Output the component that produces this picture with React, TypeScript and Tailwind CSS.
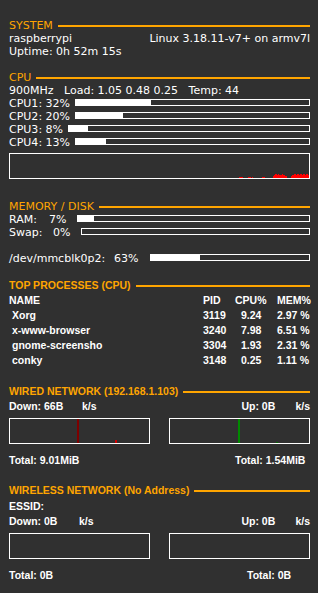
import clsx from "clsx";

const Header = ({ title, bold }: { title: string; bold?: boolean }) => (
  <div
    className={clsx(
      "flex items-center text-[#ffa500]",
      bold ? "h-[15px]" : "h-[13px]"
    )}
  >
    <span className="whitespace-pre">{title}</span>
    <div className="ml-[5px] h-[2px] flex-1 bg-[#ffa500]" />
  </div>
);

const Bar = ({ pct, className }: { pct: number; className?: string }) => (
  <div className={clsx("mt-[2px] h-[7px] flex-1 border border-white", className)}>
    <div className="h-full bg-white" style={{ width: `${pct}%` }} />
  </div>
);

const cpus = [
  { name: "CPU1", pct: 32, w: "w-[66px]" },
  { name: "CPU2", pct: 20, w: "w-[66px]" },
  { name: "CPU3", pct: 8, w: "w-[59px]" },
  { name: "CPU4", pct: 13, w: "w-[66px]" },
];

const procs = [
  ["Xorg", "3119", "9.24", "2.97 %"],
  ["x-www-browser", "3240", "7.98", "6.51 %"],
  ["gnome-screensho", "3304", "1.93", "2.31 %"],
  ["conky", "3148", "0.25", "1.11 %"],
];

// bits of red at the bottom of the cpu graph (x in px, h in px)
const cpuSpikes = [
  [229, 1], [230, 1], [231, 1], [232, 1], [238, 1], [239, 1], [240, 1], [242, 1],
  [252, 1], [253, 1], [254, 1],
  [263, 2], [264, 3], [265, 4], [266, 4], [267, 3], [268, 4], [269, 3], [270, 3],
  [271, 3], [272, 4], [273, 3], [274, 3], [275, 2], [276, 2],
  [281, 2], [282, 3], [283, 3], [284, 4], [285, 4], [286, 3], [287, 4], [288, 4],
  [289, 3], [290, 4], [291, 4], [292, 3], [293, 4], [294, 4], [295, 3], [296, 4],
  [297, 4], [298, 3],
];

const CpuGraph = () => (
  <div className="mt-[4px] h-[26px] border border-white">
    <svg width="299" height="24" className="block">
      {cpuSpikes.map(([x, h]) => (
        <rect key={x} x={x} y={24 - h} width="1" height={h} fill="#ff0000" />
      ))}
    </svg>
  </div>
);

const NetBox = ({ children }: { children?: React.ReactNode }) => (
  <div className="h-[26px] w-[141px] border border-white">
    <svg width="139" height="24" className="block">
      {children}
    </svg>
  </div>
);

export default function App() {
  return (
    <div className="h-[593px] w-[318px] overflow-hidden bg-[#303030] pl-[9px] pr-[8px] pt-[19px] text-white">
      <div className="font-['DejaVu_Sans',sans-serif] text-[11px] leading-[13px]">
        <Header title="SYSTEM" />
        <div className="flex justify-between">
          <span>raspberrypi</span>
          <span>Linux 3.18.11-v7+ on armv7l</span>
        </div>
        <div>Uptime: 0h 52m 15s</div>
        <div className="h-[13px]" />

        <Header title="CPU" />
        <div className="whitespace-pre">900MHz   Load: 1.05 0.48 0.25   Temp: 44</div>
        {cpus.map((c) => (
          <div key={c.name} className="flex h-[13px]">
            <span className={clsx("shrink-0", c.w)}>
              {c.name}: {c.pct}%
            </span>
            <Bar pct={c.pct} />
          </div>
        ))}
        <CpuGraph />

        <div className="mt-[21px]">
          <Header title="MEMORY / DISK" />
        </div>
        <div className="flex h-[13px]">
          <div className="flex w-[68px] shrink-0">
            <span className="w-[40px]">RAM:</span>
            <span>7%</span>
          </div>
          <Bar pct={7} />
        </div>
        <div className="flex h-[13px]">
          <div className="flex w-[72px] shrink-0">
            <span className="w-[44px]">Swap:</span>
            <span>0%</span>
          </div>
          <Bar pct={0} />
        </div>
        <div className="h-[13px]" />
        <div className="flex h-[13px]">
          <div className="flex w-[141px] shrink-0">
            <span className="w-[105px]">/dev/mmcblk0p2:</span>
            <span>63%</span>
          </div>
          <Bar pct={31} className="mt-[1px]" />
        </div>
      </div>

      <div className="mt-[13px] font-['Liberation_Sans',Arial,sans-serif] text-[10.5px] font-bold leading-[15px]">
        <Header title="TOP PROCESSES (CPU)" bold />
        <div className="grid grid-cols-[194px_32px_42px_1fr]">
          <span>NAME</span>
          <span>PID</span>
          <span>CPU%</span>
          <span>MEM%</span>
          {procs.map((p) => (
            <div key={p[0]} className="contents">
              <span className="pl-[3px]">{p[0]}</span>
              <span>{p[1]}</span>
              <span className="pl-[6px]">{p[2]}</span>
              <span>{p[3]}</span>
            </div>
          ))}
        </div>

        <div className="mt-[16px]">
          <Header title="WIRED NETWORK (192.168.1.103)" bold />
        </div>
        <div className="flex">
          <span className="w-[73px]">Down: 66B</span>
          <span>k/s</span>
          <span className="ml-auto w-[54px]">Up: 0B</span>
          <span>k/s</span>
        </div>
        <div className="mt-[4px] flex justify-between">
          <NetBox>
            <rect x="67" y="0" width="2" height="24" fill="#7d0000" />
            <rect x="105" y="21" width="2" height="3" fill="#d00000" />
          </NetBox>
          <NetBox>
            <rect x="68" y="0" width="2" height="24" fill="#008a00" />
            <rect x="106" y="23" width="2" height="1" fill="#006a00" />
          </NetBox>
        </div>
        <div className="mt-[9px] flex">
          <span className="w-[226px]">Total: 9.01MiB</span>
          <span>Total: 1.54MiB</span>
        </div>

        <div className="mt-[15px]">
          <Header title="WIRELESS NETWORK (No Address)" bold />
        </div>
        <div className="mt-[1px]">ESSID:</div>
        <div className="flex">
          <span className="w-[70px]">Down: 0B</span>
          <span>k/s</span>
          <span className="ml-auto w-[54px]">Up: 0B</span>
          <span>k/s</span>
        </div>
        <div className="mt-[4px] flex justify-between">
          <NetBox />
          <NetBox />
        </div>
        <div className="mt-[9px] flex">
          <span className="w-[238px]">Total: 0B</span>
          <span>Total: 0B</span>
        </div>
      </div>
    </div>
  );
}
